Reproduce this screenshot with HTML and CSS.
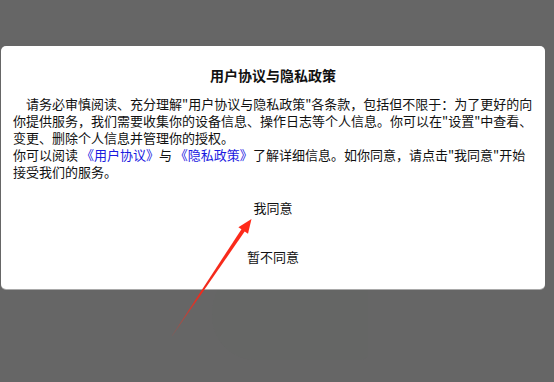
FILE: index.html
```html
<!DOCTYPE html>
<html>
<head>
    <link rel="stylesheet" href="styles.css">
    <title>用户协议与隐私政策</title>
</head>
<body>
<div class="ghost"></div>

<div class="dialog">
    <h1 class="dialog-title">用户协议与隐私政策</h1>
    <div class="dialog-text">
        <p class="indent">请务必审慎阅读、充分理解"用户协议与隐私政策"各条款，包括但不限于：为了更好的向你提供服务，我们需要收集你的设备信息、操作日志等个人信息。你可以在"设置"中查看、变更、删除个人信息并管理你的授权。</p>
        <p>你可以阅读 <a href="#" class="link">《用户协议》</a>与 <a href="#" class="link">《隐私政策》</a>了解详细信息。如你同意，请点击"我同意"开始接受我们的服务。</p>
    </div>
    <button class="dialog-btn agree">我同意</button>
    <button class="dialog-btn">暂不同意</button>
</div>

<!-- annotation arrow -->
<svg class="arrow" width="554" height="382" viewBox="0 0 554 382">
    <defs>
        <linearGradient id="fade" x1="172" y1="336" x2="251" y2="219" gradientUnits="userSpaceOnUse">
            <stop offset="0" stop-color="#f03020" stop-opacity="0.2"/>
            <stop offset="0.35" stop-color="#f02a1c"/>
            <stop offset="1" stop-color="#ff2a1a"/>
        </linearGradient>
    </defs>
    <polygon points="171.6,336.2 172.4,335.8 245.7,230.1 242.3,227.9" fill="url(#fade)"/>
    <polygon points="251.5,219 238.4,227.3 248,233.8" fill="#ff2a1a"/>
</svg>
</body>
</html>
```

FILE: styles.css
```css
body, html {
    margin: 0;
    padding: 0;
    height: 100%;
    overflow: hidden;
    background: #666666;
    font-family: "Noto Sans CJK SC", "Noto Sans", sans-serif;
    color: #111;
}

.ghost {
    position: absolute;
    left: 212px;
    top: 250px;
    width: 156px;
    height: 110px;
    border-radius: 90px 4px 10px 60px;
    background: rgba(96, 108, 96, 0.12);
}

.dialog {
    position: relative;
    margin: 46px 0 0 1px;
    width: 544px;
    height: 243px;
    box-sizing: border-box;
    padding: 20px 12px 0 12px;
    background: #fff;
    border-radius: 5px;
    box-shadow: 0 1px 0 #a9a9a9;
    display: flex;
    flex-direction: column;
    align-items: center;
}

.dialog-title {
    margin: 0;
    font-size: 14px;
    line-height: 18px;
    font-weight: bold;
}

.dialog-text {
    margin-top: 11px;
    width: 100%;
    font-size: 13px;
    line-height: 17px;
}

.dialog-text p {
    margin: 0;
}

.indent {
    text-indent: 1em;
}

.link {
    color: #1a1adf;
    text-decoration: none;
}

.dialog-btn {
    border: none;
    background: none;
    padding: 0;
    font-family: inherit;
    font-size: 13px;
    line-height: 20px;
    color: #111;
    margin-top: 29px;
}

.dialog-btn.agree {
    margin-top: 18px;
}

.arrow {
    position: absolute;
    left: 0;
    top: 0;
    pointer-events: none;
}
```
